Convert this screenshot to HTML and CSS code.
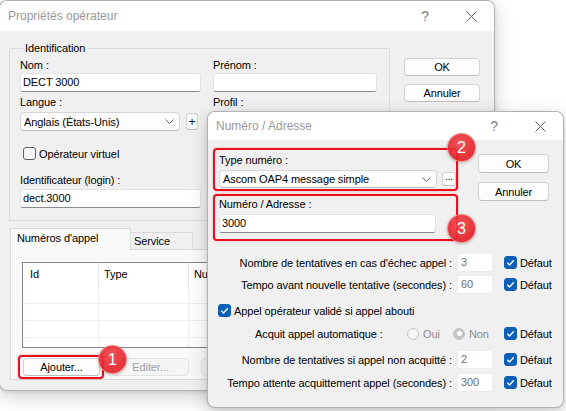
FILE: index.html
```html
<!DOCTYPE html>
<html lang="fr">
<head>
<meta charset="utf-8">
<title>Propriétés opérateur</title>
<link rel="stylesheet" href="styles.css">
</head>
<body>
<div class="desktop">

  <section class="window win-main">
    <header class="titlebar">
      <span class="title">Propriétés opérateur</span>
      <span class="tb-help">?</span>
      <span class="tb-close"><svg width="11" height="11" viewBox="0 0 11 11"><path d="M0.5 0.5L10.5 10.5M10.5 0.5L0.5 10.5" stroke="#5e5e5e" stroke-width="1" fill="none"/></svg></span>
    </header>
    <div class="main-body">
      <div class="main-left">
        <fieldset class="group">
          <legend>Identification</legend>
          <div class="id-grid">
            <div class="field">
              <div class="lbl">Nom :</div>
              <div class="input">DECT 3000</div>
            </div>
            <div class="field">
              <div class="lbl">Prénom :</div>
              <div class="input"></div>
            </div>
            <div class="field row-b">
              <div class="lbl lbl-b">Langue :</div>
              <div class="combo-line">
                <div class="combo combo-lang"><span>Anglais (États-Unis)</span><svg class="chev" width="9" height="5" viewBox="0 0 9 5"><path d="M0.5 0.5L4.5 4.5L8.5 0.5" stroke="#606060" stroke-width="1" fill="none"/></svg></div>
                <div class="mini-btn plus">+</div>
              </div>
            </div>
            <div class="field row-b">
              <div class="lbl lbl-b">Profil :</div>
              <div class="combo"><span></span><svg class="chev" width="9" height="5" viewBox="0 0 9 5"><path d="M0.5 0.5L4.5 4.5L8.5 0.5" stroke="#606060" stroke-width="1" fill="none"/></svg></div>
            </div>
            <div class="field left-only row-c">
              <div class="check"><span class="cb"></span><span>Opérateur virtuel</span></div>
            </div>
            <div class="field left-only row-d">
              <div class="lbl lbl-d">Identificateur (login) :</div>
              <div class="input">dect.3000</div>
            </div>
          </div>
        </fieldset>

        <div class="tabs">
          <div class="tab-strip">
            <div class="tab active">Numéros d'appel</div>
            <div class="tab">Service</div>
          </div>
          <div class="tab-panel">
            <div class="listview">
              <div class="lv-head">
                <div class="lv-h">Id</div>
                <div class="lv-h">Type</div>
                <div class="lv-h">Numéro</div>
              </div>
              <div class="lv-row"><div></div><div></div><div></div></div>
              <div class="lv-row"><div></div><div></div><div></div></div>
              <div class="lv-row"><div></div><div></div><div></div></div>
              <div class="lv-row"><div></div><div></div><div></div></div>
            </div>
            <div class="panel-buttons">
              <div class="btn btn-panel">Ajouter...</div>
              <div class="btn btn-panel disabled">Editer...</div>
              <div class="btn btn-panel disabled"></div>
            </div>
          </div>
        </div>
      </div>
      <div class="main-right">
        <div class="btn btn-side">OK</div>
        <div class="btn btn-side">Annuler</div>
      </div>
    </div>
  </section>

  <section class="window win-dialog">
    <header class="titlebar titlebar-d">
      <span class="title">Numéro / Adresse</span>
      <span class="tb-help">?</span>
      <span class="tb-close"><svg width="11" height="11" viewBox="0 0 11 11"><path d="M0.5 0.5L10.5 10.5M10.5 0.5L0.5 10.5" stroke="#5e5e5e" stroke-width="1" fill="none"/></svg></span>
    </header>
    <div class="dlg-body">
      <div class="dlg-top">
        <div class="dlg-fields">
          <div class="lbl">Type numéro :</div>
          <div class="combo-line">
            <div class="combo combo-type"><span>Ascom OAP4 message simple</span><svg class="chev" width="9" height="5" viewBox="0 0 9 5"><path d="M0.5 0.5L4.5 4.5L8.5 0.5" stroke="#606060" stroke-width="1" fill="none"/></svg></div>
            <div class="mini-btn dots">...</div>
          </div>
          <div class="lbl lbl-addr">Numéro / Adresse :</div>
          <div class="input input-addr">3000</div>
        </div>
        <div class="dlg-buttons">
          <div class="btn btn-dlg">OK</div>
          <div class="btn btn-dlg">Annuler</div>
        </div>
      </div>

      <div class="opt-row r1">
        <span class="opt-lbl">Nombre de tentatives en cas d'échec appel :</span>
        <span class="num">3</span>
        <span class="defaut"><span class="cb on"><svg width="11" height="11" viewBox="0 0 11 11"><path d="M2.3 5.8L4.5 8L8.8 3.3" stroke="#fff" stroke-width="1.3" fill="none"/></svg></span>Défaut</span>
      </div>
      <div class="opt-row r2">
        <span class="opt-lbl">Tempo avant nouvelle tentative (secondes) :</span>
        <span class="num">60</span>
        <span class="defaut"><span class="cb on"><svg width="11" height="11" viewBox="0 0 11 11"><path d="M2.3 5.8L4.5 8L8.8 3.3" stroke="#fff" stroke-width="1.3" fill="none"/></svg></span>Défaut</span>
      </div>
      <div class="opt-check">
        <span class="cb on"><svg width="11" height="11" viewBox="0 0 11 11"><path d="M2.3 5.8L4.5 8L8.8 3.3" stroke="#fff" stroke-width="1.3" fill="none"/></svg></span>
        <span>Appel opérateur validé si appel abouti</span>
      </div>
      <div class="opt-row r3">
        <span class="acq-lbl">Acquit appel automatique :</span>
        <span class="radio-opt opt-oui"><span class="rd"></span>Oui</span>
        <span class="radio-opt opt-non"><span class="rd on"></span>Non</span>
        <span class="defaut defaut-tight"><span class="cb on"><svg width="11" height="11" viewBox="0 0 11 11"><path d="M2.3 5.8L4.5 8L8.8 3.3" stroke="#fff" stroke-width="1.3" fill="none"/></svg></span>Défaut</span>
      </div>
      <div class="opt-row r4">
        <span class="opt-lbl">Nombre de tentatives si appel non acquitté :</span>
        <span class="num">2</span>
        <span class="defaut"><span class="cb on"><svg width="11" height="11" viewBox="0 0 11 11"><path d="M2.3 5.8L4.5 8L8.8 3.3" stroke="#fff" stroke-width="1.3" fill="none"/></svg></span>Défaut</span>
      </div>
      <div class="opt-row r5">
        <span class="opt-lbl">Tempo attente acquittement appel (secondes) :</span>
        <span class="num">300</span>
        <span class="defaut"><span class="cb on"><svg width="11" height="11" viewBox="0 0 11 11"><path d="M2.3 5.8L4.5 8L8.8 3.3" stroke="#fff" stroke-width="1.3" fill="none"/></svg></span>Défaut</span>
      </div>
    </div>
  </section>

  <div class="mark mark-add"></div>
  <div class="mark mark-type"></div>
  <div class="mark mark-addr"></div>
  <div class="badge badge-1">1</div>
  <div class="badge badge-2">2</div>
  <div class="badge badge-3">3</div>
</div>
</body>
</html>
```
FILE: styles.css
```css
* { box-sizing: border-box; }
html, body { margin: 0; padding: 0; }
body {
  width: 566px;
  height: 411px;
  overflow: hidden;
  background: #ffffff;
  font-family: "Liberation Sans", Arial, sans-serif;
  font-size: 11px;
  letter-spacing: -0.1px;
  color: #000;
}
.desktop { position: relative; width: 566px; height: 411px; overflow: hidden; }

/* windows */
.window {
  position: absolute;
  background: #f0f0f0;
  border: 1px solid rgba(0,0,0,0.26);
  border-radius: 8px;
  overflow: hidden;
  box-shadow: 0 6px 20px rgba(0,0,0,0.18), 0 1px 4px rgba(0,0,0,0.10);
}
.win-main { left: -1px; top: 0; width: 496px; height: 391px; }
.win-dialog { left: 207px; top: 111px; width: 357px; height: 297px; }

.titlebar {
  display: flex;
  align-items: center;
  height: 30px;
  background: #fff;
}
.titlebar-d { height: 28px; }
.title {
  flex: 1;
  padding-left: 8px;
  font-size: 12px;
  letter-spacing: 0;
  color: #999;
}
.tb-help {
  width: 46px;
  text-align: center;
  font-size: 14px;
  color: #808080;
}
.tb-close {
  width: 46px;
  display: flex;
  justify-content: center;
  align-items: center;
}

/* main window body */
.main-body { display: flex; padding: 10px 0 0 9px; }
.main-left { width: 381px; }
.main-right { margin-left: 14px; padding-top: 17px; display: flex; flex-direction: column; gap: 8px; }

.group {
  margin: 0;
  border: 1px solid #dcdcdc;
  padding: 3px 11px 12px 10px;
  min-width: 0;
}
.group legend {
  padding: 0 2px;
  margin-left: 3px;
  line-height: 14px;
}
.id-grid {
  display: grid;
  grid-template-columns: 181px 164px;
  column-gap: 12px;
}
.left-only { grid-column: 1; }
.lbl { line-height: 14px; height: 14px; margin-bottom: 1px; }
.row-b { margin-top: 3px; }
.lbl-b { margin-bottom: 3px; }
.row-c { margin-top: 15px; height: 15px; }
.row-d { margin-top: 12px; }
.lbl-d { margin-bottom: 2px; }

.input {
  height: 19px;
  background: #fff;
  border: 1px solid #e3e3e3;
  border-bottom-color: #8a8a8a;
  border-radius: 3px;
  padding-left: 2px;
  line-height: 17px;
}

.combo-line { display: flex; align-items: center; }
.combo {
  height: 19px;
  display: flex;
  align-items: center;
  justify-content: space-between;
  background: #fdfdfd;
  border: 1px solid #d6d6d6;
  border-bottom-color: #bdbdbd;
  border-radius: 4px;
  padding: 0 5px 0 3px;
}
.combo-lang { width: 160px; }
.combo-type { width: 218px; height: 18px; }
.mini-btn {
  display: flex;
  align-items: center;
  justify-content: center;
  background: #fdfdfd;
  border: 1px solid #d0d0d0;
  border-bottom-color: #bcbcbc;
  border-radius: 3px;
}
.plus { width: 12px; height: 17px; margin-left: 6px; font-size: 12px; }
.dots { width: 14px; height: 14px; margin-left: 5px; font-size: 10px; line-height: 8px; align-items: flex-start; }

.check { display: flex; align-items: center; height: 15px; padding-left: 3px; gap: 3px; }
.cb {
  width: 13px;
  height: 13px;
  flex: none;
  display: flex;
  align-items: center;
  justify-content: center;
  border: 1px solid #5f5f5f;
  border-radius: 3px;
  background: #f7f7f7;
}
.cb.on { background: #0b5fb5; border-color: #0b5fb5; }

/* tabs */
.tabs { margin-top: 7px; }
.tab-strip {
  display: flex;
  align-items: flex-end;
  height: 22px;
  padding-left: 1px;
  margin-bottom: -1px;
  position: relative;
  z-index: 1;
}
.tab {
  height: 18px;
  width: 63px;
  margin-left: -1px;
  border: 1px solid #d9d9d9;
  background: #f0f0f0;
  padding-left: 3px;
  line-height: 17px;
}
.tab.active {
  height: 22px;
  width: 121px;
  margin-left: 0;
  border-bottom: none;
  background: #f9f9f9;
  padding-left: 6px;
  line-height: 19px;
}
.tab-panel {
  height: 131px;
  width: 380px;
  margin-left: 1px;
  border: 1px solid #d9d9d9;
  background: #f9f9f9;
  padding: 12px 0 0 11px;
}
.listview {
  width: 356px;
  height: 86px;
  border: 1px solid #828790;
  background: #fff;
  overflow: hidden;
}
.lv-head, .lv-row {
  display: grid;
  grid-template-columns: 76px 90px 1fr;
}
.lv-head { height: 24px; }
.lv-h {
  line-height: 23px;
  padding-left: 7px;
  border-right: 1px solid #e5e5e5;
  white-space: nowrap;
  overflow: hidden;
}
.lv-h:nth-child(2), .lv-h:nth-child(3) { padding-left: 5px; }
.lv-row { height: 17px; }
.lv-row > div { border-right: 1px solid #efefef; border-bottom: 1px solid #efefef; }

.panel-buttons { display: flex; gap: 12px; margin-top: 10px; padding-left: 1px; }

/* buttons */
.btn {
  display: flex;
  align-items: center;
  justify-content: center;
  background: #fdfdfd;
  border: 1px solid #d3d3d3;
  border-bottom-color: #bdbdbd;
  border-radius: 4px;
}
.btn.disabled { background: #f5f5f5; border-color: #e3e3e3; color: #a0a0a0; }
.btn-panel { width: 77px; height: 18px; }
.btn-side { width: 76px; height: 18px; }
.btn-dlg { width: 71px; height: 19px; }

/* dialog */
.dlg-body { padding: 13px 0 0 11px; }
.dlg-top { display: flex; }
.dlg-fields { width: 237px; }
.dlg-fields .lbl { margin-bottom: 3px; }
.dlg-fields .lbl-addr { margin-top: 9px; }
.input-addr { width: 217px; }
.dlg-buttons { margin-left: 22px; padding-top: 1px; display: flex; flex-direction: column; gap: 9px; }

.opt-row { display: flex; align-items: center; height: 19px; }
.r1 { margin-top: 20px; }
.r2 { margin-top: 3px; }
.r3 { margin-top: 6px; }
.r4 { margin-top: 7px; }
.r5 { margin-top: 4px; }
.opt-lbl { width: 233px; text-align: right; white-space: nowrap; }
.num {
  width: 36px;
  height: 19px;
  margin-left: 5px;
  background: #fff;
  border: 1px solid #ececec;
  color: #6f6f6f;
  padding-left: 3px;
  line-height: 17px;
}
.defaut { margin-left: 11px; display: flex; align-items: center; gap: 3px; }
.defaut-tight { margin-left: 0; }
.opt-check { display: flex; align-items: center; gap: 3px; height: 15px; margin-top: 9px; margin-left: -1px; }
.acq-lbl { margin-left: 36px; width: 152px; white-space: nowrap; }
.radio-opt { display: flex; align-items: center; gap: 4px; color: #8c8c8c; }
.opt-oui { width: 46px; }
.opt-non { width: 51px; }
.rd {
  width: 12px;
  height: 12px;
  border-radius: 50%;
  border: 1px solid #c4c4c4;
  background: #f6f6f6;
  display: flex;
  align-items: center;
  justify-content: center;
}
.rd.on { background: #c6c6c6; border-color: #c6c6c6; }
.rd.on::after { content: ""; width: 5px; height: 5px; border-radius: 50%; background: #fff; }

/* annotations */
.mark {
  position: absolute;
  border: 2px solid #e8121c;
  border-radius: 4px;
  box-shadow: 0 0 2px rgba(232,18,28,0.45);
}
.mark-add { left: 18px; top: 355px; width: 86px; height: 24px; }
.mark-type { left: 213px; top: 148px; width: 245px; height: 43px; }
.mark-addr { left: 213px; top: 194px; width: 245px; height: 47px; }
.badge {
  position: absolute;
  width: 29px;
  height: 29px;
  border-radius: 50%;
  background: radial-gradient(circle at 45% 35%, #f2474c 0%, #e4262d 60%, #d41c23 100%);
  border: 1px solid rgba(255,200,200,0.6);
  opacity: 0.92;
  color: #fff;
  font-size: 16px;
  letter-spacing: 0;
  display: flex;
  align-items: center;
  justify-content: center;
  box-shadow: 0 1px 3px rgba(0,0,0,0.25);
}
.badge-1 { left: 98px; top: 345px; }
.badge-2 { left: 447px; top: 133px; }
.badge-3 { left: 447px; top: 214px; }
```
